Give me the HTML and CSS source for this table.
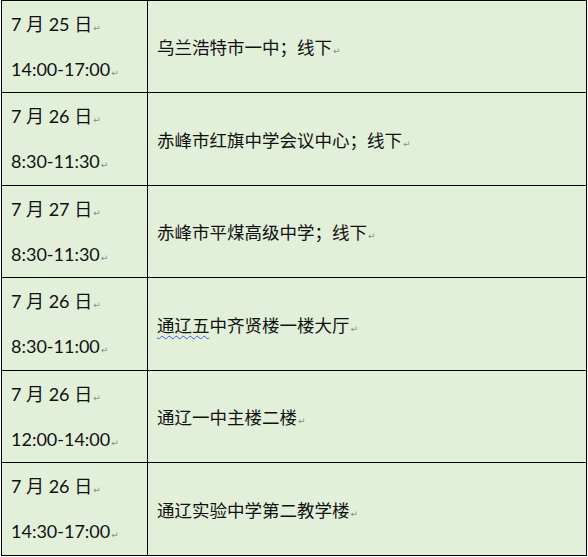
FILE: index.html
```html
<!DOCTYPE html>
<html lang="zh-CN">
<head>
<meta charset="utf-8">
<link rel="stylesheet" href="styles.css">
</head>
<body>
<table class="sched">
  <colgroup><col class="c-when"><col class="c-where"></colgroup>
  <tr class="r-a">
    <td class="when"><div class="ln">7 月 25 日<span class="pm">↵</span></div><div class="ln">14:00-17:00<span class="pm">↵</span></div></td>
    <td class="where">乌兰浩特市一中；线下<span class="pm">↵</span></td>
  </tr>
  <tr class="r-b">
    <td class="when"><div class="ln">7 月 26 日<span class="pm">↵</span></div><div class="ln">8:30-11:30<span class="pm">↵</span></div></td>
    <td class="where">赤峰市红旗中学会议中心；线下<span class="pm">↵</span></td>
  </tr>
  <tr class="r-a">
    <td class="when"><div class="ln">7 月 27 日<span class="pm">↵</span></div><div class="ln">8:30-11:30<span class="pm">↵</span></div></td>
    <td class="where">赤峰市平煤高级中学；线下<span class="pm">↵</span></td>
  </tr>
  <tr class="r-b">
    <td class="when"><div class="ln">7 月 26 日<span class="pm">↵</span></div><div class="ln">8:30-11:00<span class="pm">↵</span></div></td>
    <td class="where"><span class="squiggle">通辽五</span>中齐贤楼一楼大厅<span class="pm">↵</span></td>
  </tr>
  <tr class="r-a">
    <td class="when"><div class="ln">7 月 26 日<span class="pm">↵</span></div><div class="ln">12:00-14:00<span class="pm">↵</span></div></td>
    <td class="where">通辽一中主楼二楼<span class="pm">↵</span></td>
  </tr>
  <tr class="r-b">
    <td class="when"><div class="ln">7 月 26 日<span class="pm">↵</span></div><div class="ln">14:30-17:00<span class="pm">↵</span></div></td>
    <td class="where">通辽实验中学第二教学楼<span class="pm">↵</span></td>
  </tr>
</table>
</body>
</html>
```
FILE: styles.css
```css
html, body {
  margin: 0;
  padding: 0;
  background: #ffffff;
}

.sched {
  border-collapse: collapse;
  margin-left: 1px;
  width: 586px;
  table-layout: fixed;
  background: #e2efd9;
  font-family: "Lato", "Noto Sans CJK SC", sans-serif;
  color: #111111;
}

.c-when { width: 146px; }

.sched td {
  border: 1px solid #000000;
  padding: 0;
  vertical-align: middle;
}

.r-a td { height: 91px; }
.r-b td { height: 92px; }

.when {
  padding-left: 9px !important;
  font-size: 18px;
}

.when .ln {
  height: 45px;
  line-height: 45px;
  white-space: nowrap;
}

.where {
  padding-left: 9px !important;
  font-size: 17.5px;
  white-space: nowrap;
}

.pm {
  font-family: "DejaVu Sans", sans-serif;
  font-size: 9px;
  color: #8c8c8c;
  margin-left: 1px;
}

.squiggle {
  text-decoration-line: underline;
  text-decoration-style: wavy;
  text-decoration-color: #3f5bd4;
  text-decoration-thickness: 1px;
  text-underline-offset: 3px;
}
```
